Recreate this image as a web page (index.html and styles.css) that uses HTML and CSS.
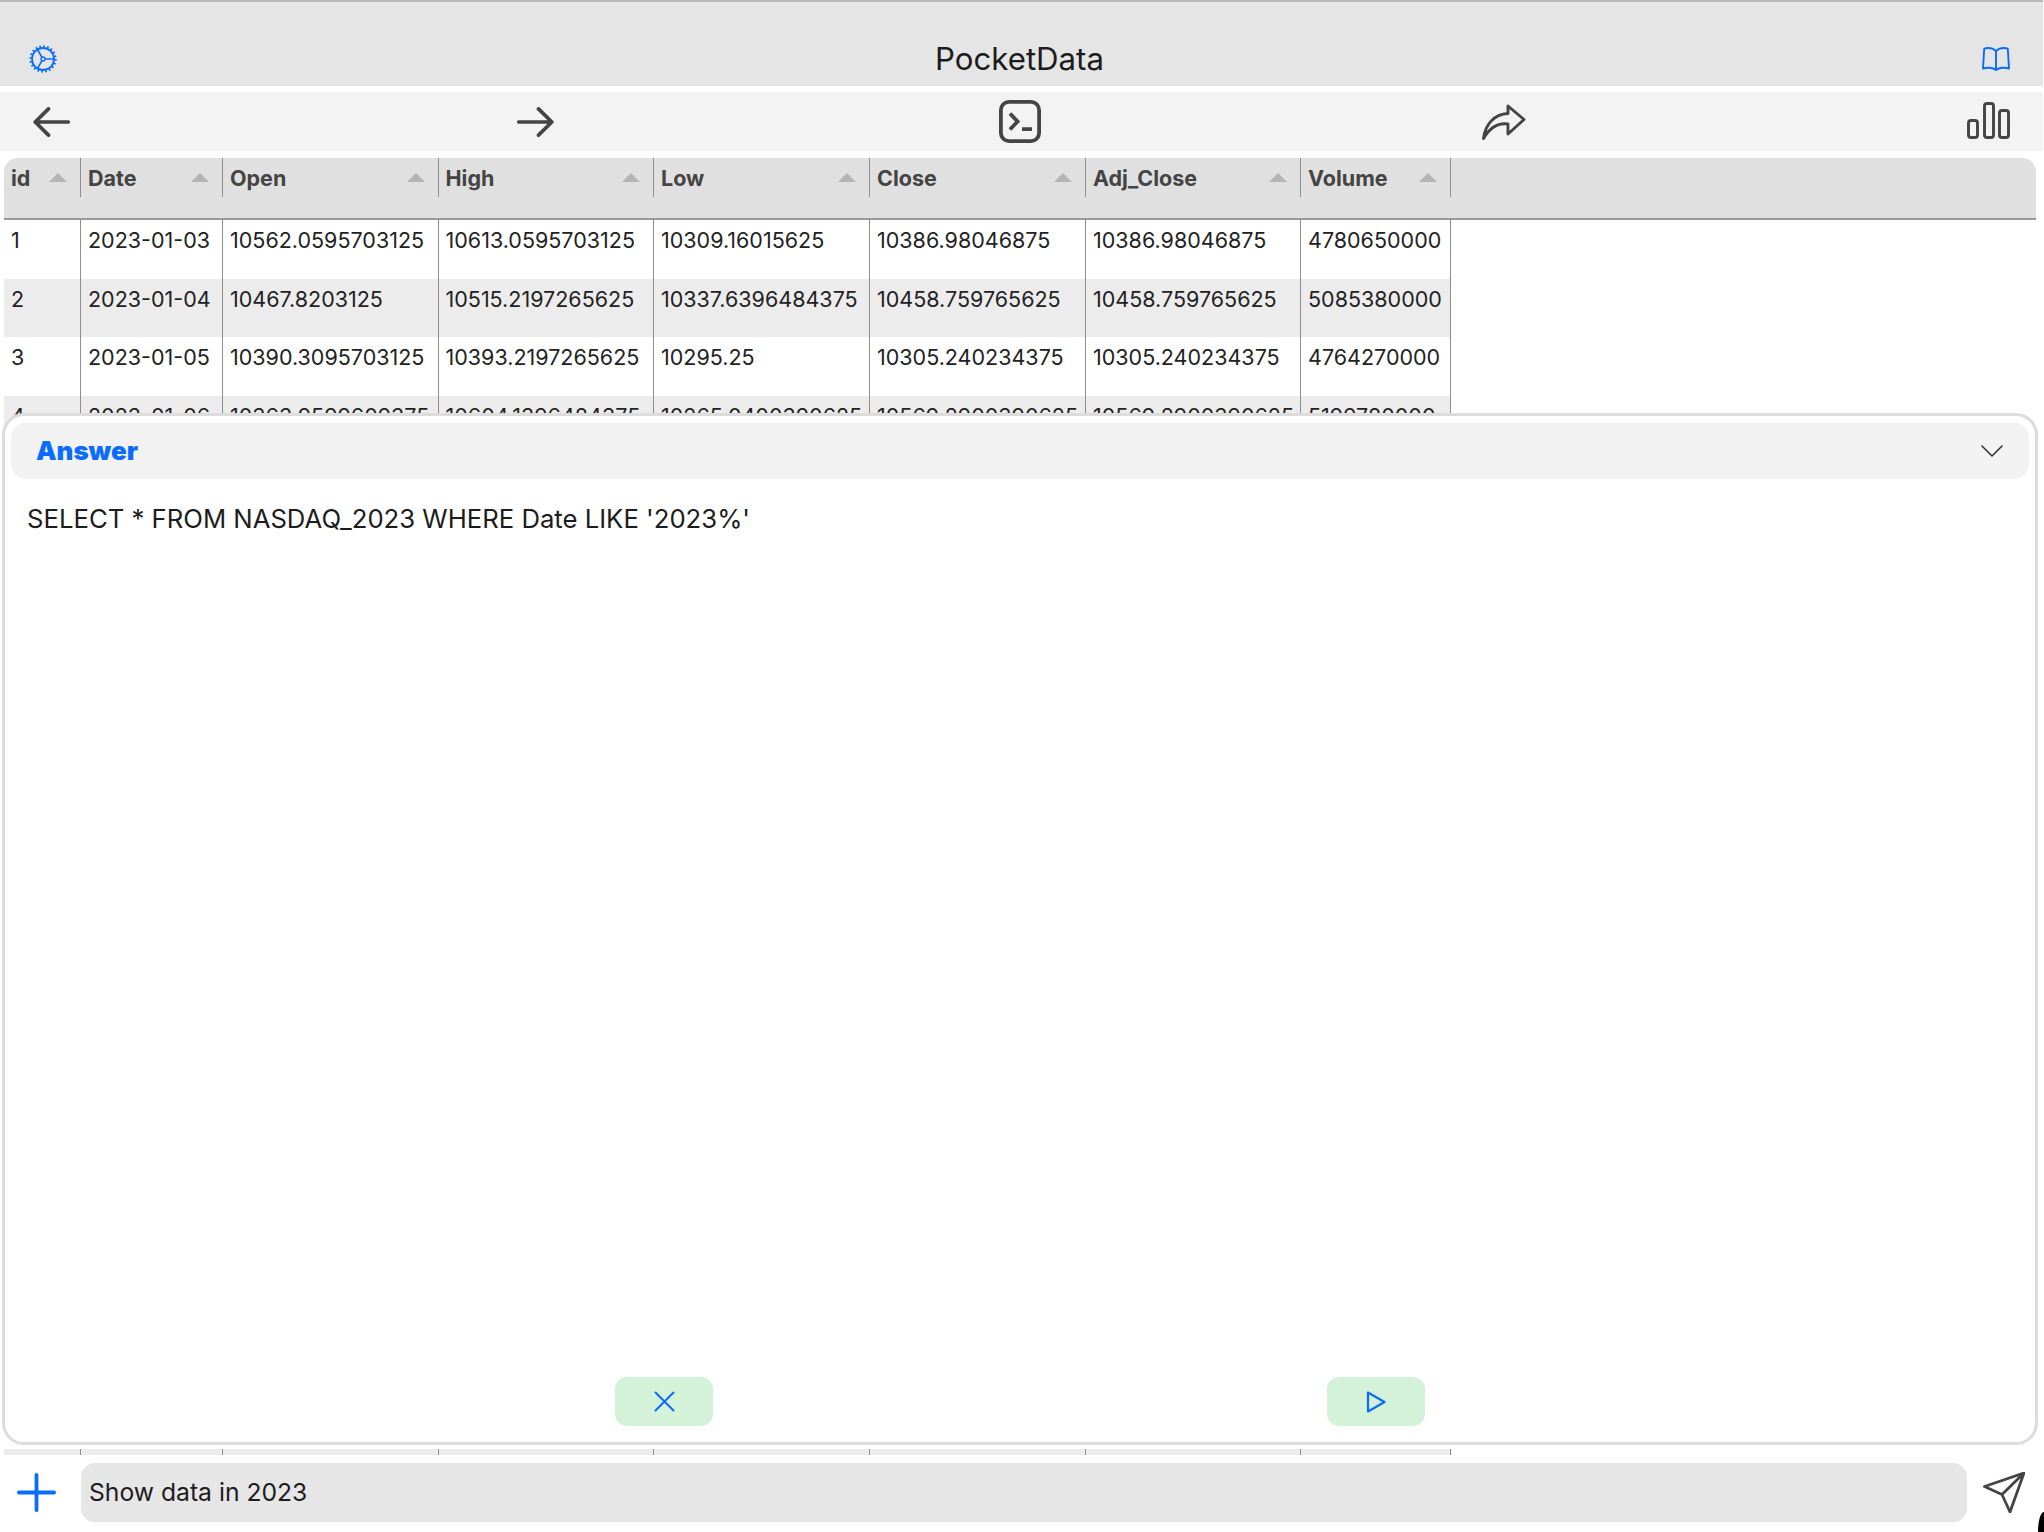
FILE: index.html
```html
<!DOCTYPE html>
<html lang="en">
<head>
<meta charset="utf-8">
<title>PocketData</title>
<link rel="stylesheet" href="styles.css">
</head>
<body>
<div class="app">
  <header class="titlebar">
    <svg class="icon-gear" viewBox="0 0 28 28" fill="none" stroke="#0a6cff">
      <circle cx="14" cy="14" r="11" stroke-width="1.8"/>
      <circle cx="14" cy="14" r="12.6" stroke-width="2.2" stroke-dasharray="1.6 2.35"/>
      <circle cx="14" cy="14" r="2" stroke-width="1.3"/>
      <path d="M16 14H25M13 12.3L8.5 4.5M13 15.7L8.5 23.5" stroke-width="1.6"/>
    </svg>
    <h1 class="title">PocketData</h1>
    <svg class="icon-book" viewBox="0 0 28 24" fill="none" stroke="#0a6cff" stroke-width="1.9" stroke-linejoin="round">
      <path d="M14 4.5C12.5 2 9.5 1 6 1C4.5 1 3 1.3 2.2 1.8L1 21.5C3.5 20.8 5.5 20.6 8 20.8C10.5 21 12.5 21.8 14 23C15.5 21.8 17.5 21 20 20.8C22.5 20.6 24.5 20.8 27 21.5L25.8 1.8C25 1.3 23.5 1 22 1C18.5 1 15.5 2 14 4.5V22"/>
    </svg>
  </header>

  <nav class="toolbar">
    <span class="tool">
      <svg class="icon-arrow" viewBox="0 0 37 30" fill="none" stroke="#444" stroke-width="3.7" stroke-linecap="round" stroke-linejoin="round"><path d="M35.2 15H2.2M15.5 1.9L2.2 15L15.5 28.1"/></svg>
    </span>
    <span class="tool">
      <svg class="icon-arrow" viewBox="0 0 37 30" fill="none" stroke="#444" stroke-width="3.7" stroke-linecap="round" stroke-linejoin="round"><path d="M1.8 15H34.8M21.5 1.9L34.8 15L21.5 28.1"/></svg>
    </span>
    <span class="tool">
      <svg class="icon-terminal" viewBox="0 0 42 43" fill="none" stroke="#444" stroke-width="3.8"><rect x="1.9" y="1.9" width="38.2" height="39.2" rx="8"/><path d="M11 13.5L18.5 21.5L11 29.5M23 29.2H33"/></svg>
    </span>
    <span class="tool">
      <svg class="icon-share" viewBox="0 0 44 36" fill="none" stroke="#444" stroke-width="2.9" stroke-linejoin="round"><path d="M1.5 34.5C3 21 12 10 26 9.5V2L42 15.5L26 30V20C15 18.5 7 25 1.5 34.5Z"/></svg>
    </span>
    <span class="tool">
      <svg class="icon-bars" viewBox="0 0 43 37" fill="none" stroke="#444" stroke-width="2.9"><rect x="1.5" y="18.5" width="9" height="17" rx="2.5"/><rect x="17.5" y="1.5" width="9" height="34" rx="2.5"/><rect x="32.5" y="8.5" width="9" height="27" rx="2.5"/></svg>
    </span>
  </nav>

  <main class="workspace">
    <section class="grid">
      <div class="grid-head">
        <div class="row">
          <div class="th">id<i class="sort"></i></div>
          <div class="th">Date<i class="sort"></i></div>
          <div class="th">Open<i class="sort"></i></div>
          <div class="th">High<i class="sort"></i></div>
          <div class="th">Low<i class="sort"></i></div>
          <div class="th">Close<i class="sort"></i></div>
          <div class="th">Adj_Close<i class="sort"></i></div>
          <div class="th">Volume<i class="sort"></i></div>
        </div>
      </div>
      <div class="grid-body">
        <div class="row">
          <div class="td">1</div><div class="td">2023-01-03</div><div class="td">10562.0595703125</div><div class="td">10613.0595703125</div><div class="td">10309.16015625</div><div class="td">10386.98046875</div><div class="td">10386.98046875</div><div class="td">4780650000</div>
        </div>
        <div class="row even">
          <div class="td">2</div><div class="td">2023-01-04</div><div class="td">10467.8203125</div><div class="td">10515.2197265625</div><div class="td">10337.6396484375</div><div class="td">10458.759765625</div><div class="td">10458.759765625</div><div class="td">5085380000</div>
        </div>
        <div class="row">
          <div class="td">3</div><div class="td">2023-01-05</div><div class="td">10390.3095703125</div><div class="td">10393.2197265625</div><div class="td">10295.25</div><div class="td">10305.240234375</div><div class="td">10305.240234375</div><div class="td">4764270000</div>
        </div>
        <div class="row even">
          <div class="td">4</div><div class="td">2023-01-06</div><div class="td">10363.9599609375</div><div class="td">10604.1396484375</div><div class="td">10265.0400390625</div><div class="td">10569.2900390625</div><div class="td">10569.2900390625</div><div class="td">5199780000</div>
        </div>
        <div class="rows-hidden"></div>
        <div class="row even">
          <div class="td"></div><div class="td"></div><div class="td"></div><div class="td"></div><div class="td"></div><div class="td"></div><div class="td"></div><div class="td"></div>
        </div>
      </div>
    </section>

    <section class="panel">
      <div class="panel-head">
        <span class="panel-title">Answer</span>
        <svg class="icon-chevron" viewBox="0 0 22 12" fill="none" stroke="#333" stroke-width="1.6" stroke-linecap="round" stroke-linejoin="round"><path d="M1 1L11 11L21 1"/></svg>
      </div>
      <p class="answer">SELECT * FROM NASDAQ_2023 WHERE Date LIKE '2023%'</p>
      <div class="actions">
        <button class="action" type="button">
          <svg class="icon-x" viewBox="0 0 21 21" fill="none" stroke="#0a6cff" stroke-width="2" stroke-linecap="round"><path d="M1.5 1.5L19.5 19.5M19.5 1.5L1.5 19.5"/></svg>
        </button>
        <button class="action" type="button">
          <svg class="icon-play" viewBox="0 0 20 22" fill="none" stroke="#0a6cff" stroke-width="2.2" stroke-linejoin="round"><path d="M2 1.5V20.5L18.5 11Z"/></svg>
        </button>
      </div>
    </section>
  </main>

  <footer class="composer">
    <svg class="icon-plus" viewBox="0 0 39 39" fill="none" stroke="#0a6cff" stroke-width="3.8" stroke-linecap="round"><path d="M19.5 1.9V37.1M1.9 19.5H37.1"/></svg>
    <div class="prompt">Show data in 2023</div>
    <svg class="icon-send" viewBox="0 0 42 41" fill="none" stroke="#444" stroke-width="2.8" stroke-linejoin="round"><path d="M41 1L1.5 14.5L19 22.5L27 40L41 1ZM41 1L19 22.5"/></svg>
  </footer>
  <i class="corner"></i>
</div>
</body>
</html>
```

FILE: styles.css
```css
* { box-sizing: border-box; }

html, body {
  margin: 0;
  height: 100%;
  background: #fff;
}

body {
  font-family: Inter, "Liberation Sans", sans-serif;
  color: #222;
  overflow: hidden;
}

.app {
  position: relative;
  width: 2043px;
  height: 1532px;
  display: flex;
  flex-direction: column;
  background: #fff;
}

.corner {
  position: absolute;
  right: -1px;
  bottom: 0;
  width: 6px;
  height: 20px;
  background: #000;
  border-radius: 6px 0 0 0 / 20px 0 0 0;
}

.titlebar {
  height: 86px;
  flex: none;
  border-top: 2px solid #b9b9b9;
  background: #e5e5e5;
  padding: 32px 33px 0 29px;
  display: flex;
  justify-content: space-between;
  align-items: flex-start;
}

.title {
  margin: -1px 0 0;
  font-size: 31.2px;
  line-height: 52px;
  font-weight: 400;
  color: #1c1c1c;
}

.icon-gear { width: 28px; height: 28px; margin-top: 11px; }
.icon-book { width: 28px; height: 24px; margin-top: 13px; }

.toolbar {
  height: 59px;
  flex: none;
  margin-top: 6px;
  background: #f3f3f3;
  padding: 0 33px 0 29px;
  display: flex;
  justify-content: space-between;
  align-items: center;
}

.tool {
  width: 44px;
  height: 44px;
  display: flex;
  align-items: center;
  justify-content: center;
}

.icon-arrow { width: 37px; height: 30px; }
.icon-terminal { width: 42px; height: 43px; }
.icon-share { width: 44px; height: 36px; }
.icon-bars { width: 43px; height: 37px; margin-top: -3px; }

.workspace {
  flex: 1;
  position: relative;
  margin-top: 7px;
  min-height: 0;
}

.grid {
  margin-left: 4px;
  width: 2032px;
  height: 100%;
  overflow: hidden;
  font-size: 21.5px;
}

.grid-head {
  height: 62px;
  background: #e0e0e0;
  border-bottom: 2px solid #999;
  border-radius: 14px 14px 0 0;
}

.row {
  display: grid;
  grid-template-columns: 77px 142px 215.5px 215.5px 216px 216px 215px 150px;
  width: 1446.5px;
}

.th {
  height: 39px;
  padding: 2px 13px 0 7px;
  border-right: 1.5px solid #8e8e8e;
  font-weight: 700;
  color: #444;
  line-height: 37px;
  display: flex;
  justify-content: space-between;
  align-items: center;
}

.sort {
  width: 0;
  height: 0;
  border-left: 9px solid transparent;
  border-right: 9px solid transparent;
  border-bottom: 9px solid #b4b4b4;
  margin-top: -2px;
}

.grid-body .row { height: 58.5px; }
.row.even { background: #ececec; }

.td {
  padding: 6px 0 0 7px;
  line-height: 28px;
  border-right: 1.5px solid #8e8e8e;
  white-space: nowrap;
  overflow: hidden;
}

.rows-hidden { height: 994.5px; }

.panel {
  position: absolute;
  left: 2px;
  top: 255px;
  width: 2036px;
  height: 1032px;
  background: #fff;
  border: 3px solid #dcdcdc;
  border-radius: 22px;
  padding: 7px 6px 16px;
  display: flex;
  flex-direction: column;
}

.panel-head {
  height: 56px;
  flex: none;
  background: #f2f2f2;
  border-radius: 15px;
  padding: 0 26px 2px 25px;
  display: flex;
  justify-content: space-between;
  align-items: center;
}

.panel-title {
  font-size: 25.9px;
  font-weight: 900;
  color: #0a6cff;
}

.icon-chevron { width: 22px; height: 12px; margin-top: 2px; }

.answer {
  flex: 1;
  margin: 0;
  padding: 24px 0 0 16px;
  font-size: 25.7px;
  line-height: 32px;
  color: #1c1c1c;
}

.actions {
  display: flex;
  justify-content: center;
  gap: 614px;
}

.action {
  width: 98px;
  height: 49px;
  padding: 0;
  border: 0;
  border-radius: 12px;
  background: #d4f2d8;
  display: flex;
  align-items: center;
  justify-content: center;
}

.icon-x { width: 21px; height: 21px; }
.icon-play { width: 20px; height: 22px; }

.composer {
  height: 77px;
  flex: none;
  position: relative;
  margin-left: 4px;
  background: #fff;
  border-radius: 10px 0 0 0;
  padding: 8px 17px 10px 13px;
  display: flex;
  align-items: flex-start;
}

.icon-plus { width: 39px; height: 39px; margin-top: 10px; flex: none; }

.prompt {
  width: 1886px;
  height: 59px;
  margin-left: 25px;
  background: #e6e6e6;
  border-radius: 14px;
  padding-left: 8px;
  font-size: 24.7px;
  line-height: 58px;
  color: #1c1c1c;
  flex: none;
}

.icon-send { width: 42px; height: 41px; margin: 9px 0 0 16px; flex: none; }
```
